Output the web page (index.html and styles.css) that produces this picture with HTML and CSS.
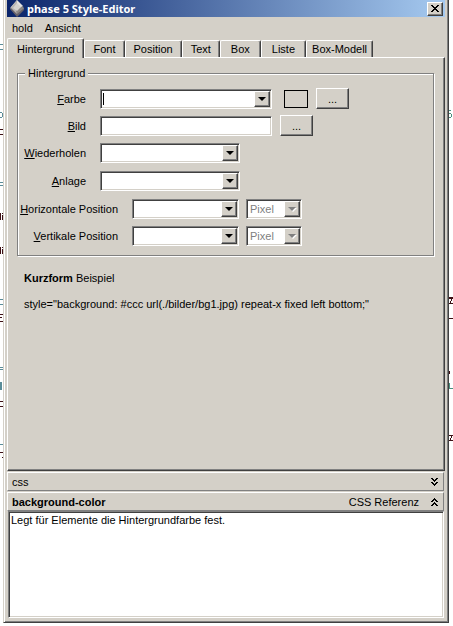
FILE: index.html
```html
<!DOCTYPE html>
<html lang="de">
<head>
    <meta charset="UTF-8">
    <meta name="viewport" content="width=device-width, initial-scale=1.0">
    <title>phase 5 Style-Editor</title>
    <link rel="stylesheet" href="styles.css">
</head>
<body>

    <!-- Code window showing on the left -->
    <svg class="code-edge" width="3" height="626" shape-rendering="crispEdges" aria-hidden="true">
        <path fill="#5a8c98" d="M0 44h3v1H0zM0 49h3v1H0zM0 112h2v1H0zM2 113h1v4H2zM0 117h2v1H0zM0 182h3v1H0zM0 185h3v1H0zM0 299h3v1H0zM0 304h3v1H0zM0 367h3v1H0zM0 369h3v1H0zM0 382h2v8H0zM0 444h3v1H0z"/>
        <path fill="#3c0f14" d="M0 129h3v1H0zM0 134h3v1H0zM0 213h1v7H0zM2 213h1v1H2zM2 215h1v5H2zM0 247h1v7H0zM2 247h1v1H2zM2 249h1v5H2zM0 314h3v1H0zM0 317h2v1H0zM0 321h3v1H0zM0 401h3v1H0zM0 406h3v1H0zM0 452h3v1H0zM2 457h1v1H2z"/>
    </svg>

    <div class="window">
        <header class="title-bar">
            <svg class="app-icon" width="16" height="17" viewBox="0 0 16 17" aria-hidden="true">
                <path fill="#e4e2e0" d="M8 0l6 6-6 4-6-3z"/>
                <path fill="#b9b5b3" d="M8 0L3 6l-2 2 7 8z"/>
                <path fill="#8b8785" d="M14 6l1 3-7 7-1-6z"/>
                <path fill="#d5d2cf" d="M8 3l4 4-4 4-4-3z"/>
                <path fill="#66616a" d="M8 14l6-5 1 1-7 7-7-8 1-1z"/>
            </svg>
            <h1>phase 5 Style-Editor</h1>
            <button class="close" type="button" aria-label="Schließen">
                <svg width="8" height="7" viewBox="0 0 8 7" shape-rendering="crispEdges" aria-hidden="true">
                    <path d="M0 0h2v1h1v1h2V1h1V0h2v1H7v1H6v1H5v1h1v1h1v1h1v1H6V6H5V5H3v1H2v1H0V6h1V5h1V4h1V3H2V2H1V1H0z"/>
                </svg>
            </button>
        </header>

        <nav class="menu">
            <button type="button">hold</button>
            <button type="button">Ansicht</button>
        </nav>

        <div class="tabs" role="tablist">
            <button class="tab active" type="button" role="tab" aria-selected="true">Hintergrund</button>
            <button class="tab" type="button" role="tab">Font</button>
            <button class="tab" type="button" role="tab">Position</button>
            <button class="tab" type="button" role="tab">Text</button>
            <button class="tab tab-wide" type="button" role="tab">Box</button>
            <button class="tab tab-wide" type="button" role="tab">Liste</button>
            <button class="tab tab-narrow" type="button" role="tab">Box-Modell</button>
        </div>

        <main class="page">
            <fieldset>
                <legend>Hintergrund</legend>

                <div class="row">
                    <label for="farbe"><u>F</u>arbe</label>
                    <span class="combo large">
                        <input class="caret" type="text" id="farbe">
                        <span class="arrow"></span>
                    </span>
                    <span class="swatch"></span>
                    <button class="browse" type="button" aria-label="Farbe wählen">...</button>
                </div>
                <div class="row">
                    <label for="bild"><u>B</u>ild</label>
                    <span class="combo large">
                        <input type="text" id="bild">
                    </span>
                    <button class="browse" type="button" aria-label="Bild wählen">...</button>
                </div>
                <div class="row tall">
                    <label for="wiederholen"><u>W</u>iederholen</label>
                    <span class="combo medium">
                        <select id="wiederholen"><option></option></select>
                        <span class="arrow"></span>
                    </span>
                </div>
                <div class="row tall">
                    <label for="anlage"><u>A</u>nlage</label>
                    <span class="combo medium">
                        <select id="anlage"><option></option></select>
                        <span class="arrow"></span>
                    </span>
                </div>
                <div class="row">
                    <label class="long" for="horizontal"><u>H</u>orizontale Position</label>
                    <span class="combo small">
                        <select id="horizontal"><option></option></select>
                        <span class="arrow"></span>
                    </span>
                    <span class="combo unit">
                        <select aria-label="Einheit horizontal" disabled><option>Pixel</option></select>
                        <span class="arrow"></span>
                    </span>
                </div>
                <div class="row tall">
                    <label class="long" for="vertikal"><u>V</u>ertikale Position</label>
                    <span class="combo small">
                        <select id="vertikal"><option></option></select>
                        <span class="arrow"></span>
                    </span>
                    <span class="combo unit">
                        <select aria-label="Einheit vertikal" disabled><option>Pixel</option></select>
                        <span class="arrow"></span>
                    </span>
                </div>
            </fieldset>

            <div class="example">
                <p><b>Kurzform</b> Beispiel</p>
                <p>style="background: #ccc url(./bilder/bg1.jpg) repeat-x fixed left bottom;"</p>
            </div>
        </main>

        <!-- Collapsible bars -->
        <div class="bar">
            <span>css</span>
            <button class="toggle" type="button" aria-label="Aufklappen">
                <svg width="7" height="8" viewBox="0 0 7 8" shape-rendering="crispEdges" aria-hidden="true">
                    <path d="M0 0h2v1h1v1h1V1h1V0h2v1H6v1H5v1H4v1H3V3H2V2H1V1H0zM0 4h2v1h1v1h1V5h1V4h2v1H6v1H5v1H4v1H3V7H2V6H1V5H0z"/>
                </svg>
            </button>
        </div>
        <div class="bar">
            <label for="info"><b>background-color</b></label>
            <span class="reference">CSS Referenz</span>
            <button class="toggle" type="button" aria-label="Zuklappen">
                <svg width="7" height="8" viewBox="0 0 7 8" shape-rendering="crispEdges" aria-hidden="true">
                    <path d="M3 0h1v1h1v1h1v1h1v1H5V3H4V2H3v1H2v1H0V3h1V2h1V1h1zM3 4h1v1h1v1h1v1h1v1H5V7H4V6H3v1H2v1H0V7h1V6h1V5h1z"/>
                </svg>
            </button>
        </div>
        <textarea id="info" class="info" readonly>Legt für Elemente die Hintergrundfarbe fest.</textarea>
    </div>

    <!-- Code window showing on the right -->
    <svg class="code-edge" width="4" height="626" shape-rendering="crispEdges" aria-hidden="true">
        <path fill="#4a9080" d="M0 110h2v1H0zM0 113h2v1H0zM2 114h1v3H2zM0 117h2v1H0zM0 383h1v6H0zM0 388h4v1H0z"/>
        <path fill="#3c0f14" d="M0 297h4v2H0zM2 299h1v2H2zM1 301h1v2H1zM0 303h4v1H0zM0 318h4v1H0zM0 371h1v3H0zM0 435h4v1H0zM2 436h1v2H2zM1 438h1v2H1zM0 440h4v1H0z"/>
    </svg>

</body>
</html>
```

FILE: styles.css
```css
/* Global Styles */
* {
    box-sizing: border-box;
}

body {
    margin: 0;
    height: 100vh;
    display: flex;
    overflow: hidden;
    background: #fff;
    color: #000;
    font-family: "Liberation Sans", Arial, sans-serif;
    font-size: 11px;
    line-height: 14px;
}

button, input, select, textarea {
    margin: 0;
    padding: 0;
    border: 0;
    border-radius: 0;
    background: none;
    color: inherit;
    font: inherit;
}

.code-edge {
    flex: none;
}

/* Window */
.window {
    flex: 1;
    min-width: 0;
    display: flex;
    flex-direction: column;
    margin-bottom: 3px;
    padding: 0 3px 4px 3px;
    background: #d4d0c8;
    border-left: 1px solid #d4d0c8;
    border-right: 1px solid #404040;
    border-bottom: 1px solid #404040;
    box-shadow: inset 1px 0 #fff, inset -1px -1px #808080;
}

.title-bar {
    display: flex;
    align-items: center;
    height: 17px;
    padding: 0 2px;
    background: linear-gradient(to right, #0a246a, #a6caf0);
    color: #fff;
}

.app-icon {
    flex: none;
}

.title-bar h1 {
    flex: 1;
    margin: 0 0 0 2px;
    font-family: "Noto Sans", Tahoma, sans-serif;
    font-size: 11px;
    font-weight: bold;
}

.close {
    display: flex;
    align-items: center;
    justify-content: center;
    width: 16px;
    height: 14px;
    background: #d4d0c8;
    border: 1px solid;
    border-color: #fff #404040 #404040 #fff;
    box-shadow: inset -1px -1px #808080;
}

.menu {
    display: flex;
    gap: 12px;
    height: 21px;
    padding: 0 5px;
}

/* Tabs */
.tabs {
    display: flex;
    align-items: flex-end;
    height: 19px;
}

.tab {
    height: 17px;
    padding: 0 8px;
    border-top: 1px solid #fff;
    border-left: 1px solid #fff;
    border-right: 1px solid #404040;
    border-radius: 2px 2px 0 0;
    box-shadow: inset -1px 0 #808080;
    white-space: nowrap;
}

.tab-wide {
    padding: 0 10px;
}

.tab-narrow {
    padding: 0 5px;
}

.tab.active {
    height: 20px;
    margin-bottom: -1px;
    padding: 0 9px;
    background: #d4d0c8;
    z-index: 1;
}

.page {
    flex: 1;
    padding: 8px 10px 0 9px;
    border: 1px solid;
    border-color: #fff #404040 #404040 #fff;
    box-shadow: inset -1px -1px #808080;
}

/* Form */
fieldset {
    display: flex;
    flex-direction: column;
    gap: 6px;
    margin: 0;
    padding: 8px 1px;
    border: 1px solid #808080;
    box-shadow: 1px 1px #fff, inset 1px 1px #fff;
}

legend {
    margin-left: 6px;
    padding: 0 3px;
    background: #d4d0c8;
}

.row {
    display: flex;
    align-items: center;
    height: 21px;
}

.row.tall {
    height: 22px;
}

.row label {
    width: 67px;
    margin-right: 14px;
    text-align: right;
    white-space: nowrap;
}

.row .long {
    width: 99px;
}

.combo {
    position: relative;
    display: flex;
    height: 20px;
    background: #fff;
    border: 1px solid;
    border-color: #808080 #fff #fff #808080;
    box-shadow: inset 1px 1px #404040, inset -1px -1px #d4d0c8;
}

.combo input, .combo select {
    width: 100%;
    padding: 0 3px;
    appearance: none;
    outline: none;
}

.combo select:disabled {
    color: #808080;
    opacity: 1;
}

.combo .caret {
    background: linear-gradient(#000, #000) 2px 3px / 1px 12px no-repeat;
}

.large {
    width: 172px;
}

.medium {
    width: 140px;
}

.small {
    width: 107px;
}

.unit {
    width: 56px;
    margin-left: 7px;
}

.arrow {
    position: absolute;
    top: 1px;
    right: 1px;
    bottom: 1px;
    display: flex;
    align-items: center;
    justify-content: center;
    width: 16px;
    background: #d4d0c8;
    border: 1px solid;
    border-color: #fff #404040 #404040 #fff;
    box-shadow: inset -1px -1px #808080;
    pointer-events: none;
}

.arrow::after {
    content: '';
    border: 4px solid transparent;
    border-top-color: #000;
    border-bottom: 0;
}

select:disabled + .arrow::after {
    border-top-color: #808080;
    filter: drop-shadow(1px 1px #fff);
}

.swatch {
    width: 24px;
    height: 18px;
    margin-left: 12px;
    border: 1px solid #000;
}

.browse {
    width: 33px;
    height: 21px;
    margin-left: 8px;
    border: 1px solid;
    border-color: #fff #404040 #404040 #fff;
    box-shadow: inset -1px -1px #808080;
}

.example {
    padding: 15px 7px;
}

.example p {
    margin: 0 0 12px;
}

/* Bottom panels */
.bar {
    display: flex;
    align-items: center;
    height: 19px;
    margin: 1px 1px 0 0;
    padding: 0 5px 0 4px;
    border: 1px solid;
    border-color: #fff #808080 #808080 #fff;
}

.reference {
    margin-left: auto;
}

.toggle {
    display: flex;
    margin-left: auto;
}

.reference + .toggle {
    margin-left: 12px;
}

.info {
    display: block;
    height: 107px;
    margin: 0 1px;
    padding: 1px 2px;
    background: #fff;
    border: 1px solid;
    border-color: #808080 #fff #fff #808080;
    box-shadow: inset 1px 1px #404040, inset -1px -1px #d4d0c8;
    outline: none;
    resize: none;
}
```
